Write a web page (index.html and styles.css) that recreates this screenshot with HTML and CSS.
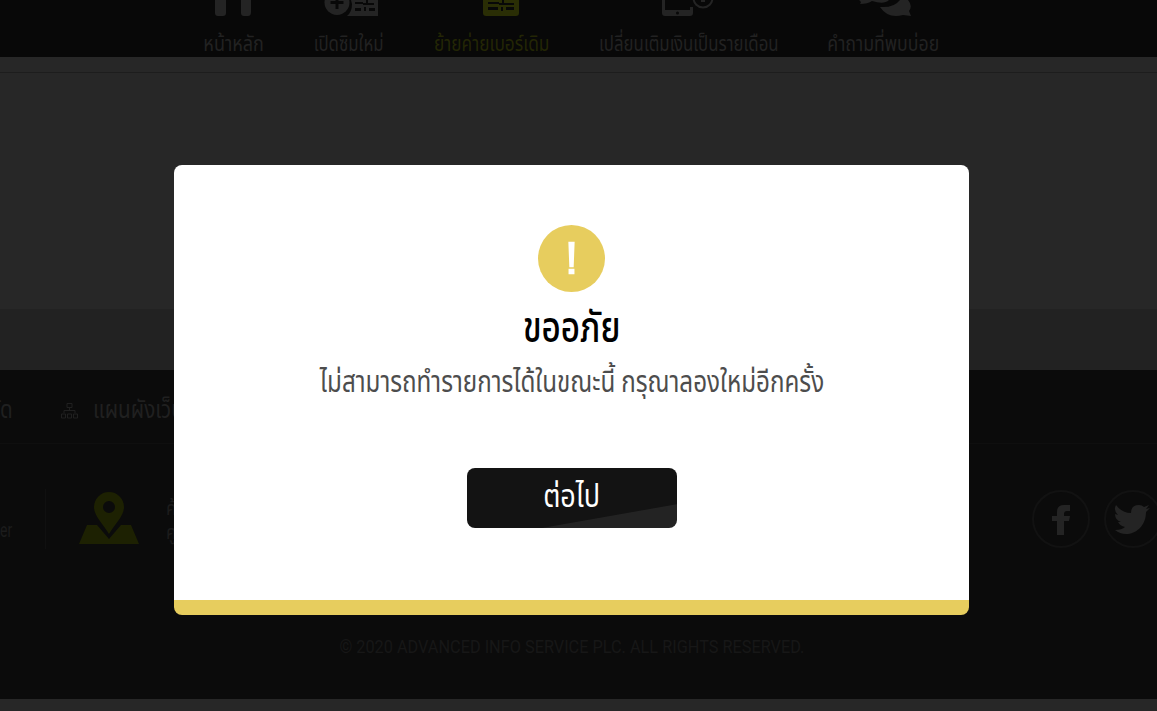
FILE: index.html
```html
<!DOCTYPE html>
<html lang="th">
<head>
<meta charset="utf-8">
<title>AIS</title>
<link rel="stylesheet" href="styles.css">
</head>
<body>
<div class="page">
  <header class="topbar">
    <nav class="nav">
      <a class="nav-item home"><svg class="nav-icon" viewBox="0 0 60 18"><path d="M11 0h36v12q0 4-3 4h-4q-3 0-3-3V0H22v13q0 3-3 3h-5q-3 0-3-3V0z"/></svg><span class="label"><span>หน้าหลัก</span></span></a>
      <a class="nav-item sim"><svg class="nav-icon" viewBox="0 0 60 18"><circle cx="18" cy="2.500" r="12.500"/><path d="M32 0h27v16H28q5-4 5-12z"/><path class="cut" d="M16.500-4h3v5h5v3h-5v5h-3V4h-5V1h5zM36 2h8v2h-8zM47 0h2v3h6v2H44V3h3zM36 8h6v3h-6zM45 7h2v4h-2zM50 8h6v3h-6z"/></svg><span class="label"><span>เปิดซิมใหม่</span></span></a>
      <a class="nav-item move"><svg class="nav-icon" viewBox="0 0 60 18"><path d="M12 0h36v13q0 3-3 3H15q-3 0-3-3z"/><path class="cut" d="M17 2h11v2H17zM31 0h2v3h10v2H28V3h3zM17 7h10v3H17zM30 7h2v4h-2zM35 7h8v3h-8z"/></svg><span class="label"><span>ย้ายค่ายเบอร์เดิม</span></span></a>
      <a class="nav-item switch"><svg class="nav-icon" viewBox="0 0 60 18"><path d="M3 0h3v10h25V7h3v6q0 3-3 3H6q-3 0-3-3z"/><circle class="cut" cx="18.500" cy="13" r="1.500"/><circle class="ring" cx="44" cy="-2" r="9.500"/><path d="M42-2h4v4h-4z"/></svg><span class="label"><span>เปลี่ยนเติมเงินเป็นรายเดือน</span></span></a>
      <a class="nav-item faq"><svg class="nav-icon" viewBox="0 0 60 18"><path d="M5 0Q8 2 6 4q8 0 12-3 12 4 17-1z"/><path d="M26 7q14 1 20-7h8q5 6 1 11l2 5-8-1q-15 4-23-8z"/></svg><span class="label"><span>คำถามที่พบบ่อย</span></span></a>
    </nav>
  </header>
  <main class="content"></main>
  <div class="pre-footer"></div>
  <footer class="footer">
    <div class="footer-links">
      <span class="link cropped">ัด</span>
      <svg class="sitemap" viewBox="0 0 17 16"><path d="M6 .5h5v4H6zM8.500 5v3M3 10V7.500h11V10M.5 11h4v4h-4zM6.500 11h4v4h-4zM12.500 11h4v4h-4z"/></svg>
      <span class="link">แผนผังเว็บ</span>
    </div>
    <div class="contact">
      <span class="latin"><span>er</span></span>
      <span class="rule"></span>
      <svg class="pin" viewBox="0 0 60 52"><path d="M8 33h10l12 14 12-14h10l8 19H0z"/><path fill-rule="evenodd" d="M30 0a15 15 0 0 0-15 15c0 9 9 17 15 27 6-10 15-18 15-27A15 15 0 0 0 30 0zm0 9a6 6 0 1 1 0 12 6 6 0 0 1 0-12z"/></svg>
      <div class="branch"><span>ค้นหา</span><span>ศูนย์</span></div>
      <div class="social">
        <svg viewBox="0 0 58 58"><circle cx="29" cy="29" r="28"/><path d="M25 45V31h-5v-5h5v-4q0-7 7-7h6v6h-3q-3 0-3 3v2h6l-1 5h-5v14z"/></svg>
        <svg viewBox="0 0 58 58"><circle cx="29" cy="29" r="28"/><path d="M11 40q7 0 10-3-5-1-7-5h3q-6-2-6-8l3 1q-5-5-2-10 6 8 15 8 0-8 8-8 3 0 5 2l5-2-3 4 4-1-4 4c0 14-10 22-20 22q-6 0-11-4z"/></svg>
      </div>
    </div>
    <p class="copyright"><span>© 2020 ADVANCED INFO SERVICE PLC. ALL RIGHTS RESERVED.</span></p>
  </footer>
</div>
<div class="overlay">
  <section class="modal">
    <svg class="alert" viewBox="0 0 68 68"><circle cx="34" cy="34" r="34"/><path d="M30.800 17h6.400l-1 26h-4.400zM31 44.500h6v5.500h-6z"/></svg>
    <h1 class="title"><span>ขออภัย</span></h1>
    <p class="message"><span>ไม่สามารถทำรายการได้ในขณะนี้ กรุณาลองใหม่อีกครั้ง</span></p>
    <button class="next"><span>ต่อไป</span></button>
  </section>
</div>
</body>
</html>
```
FILE: styles.css
```css
* { box-sizing: border-box; }
body { margin: 0; width: 1157px; height: 711px; overflow: hidden; background: #272727; font-family: Roboto, "Noto Sans Thai", "Noto Sans", "Liberation Sans", sans-serif; }
.page { height: 711px; display: flex; flex-direction: column; overflow: hidden; }
.topbar { height: 57px; background: #080808; }
.nav { display: flex; gap: 50px; padding-left: 204px; }
.nav-item { height: 57px; display: flex; flex-direction: column; align-items: center; color: #222; fill: #242424; font-size: 20px; }
.home { width: 60px; }
.sim { width: 70px; }
.move { width: 115px; color: #232605; fill: #2a2e05; }
.switch { width: 179px; }
.faq { width: 111px; }
.nav-icon { width: 60px; height: 18px; flex: none; }
.move .nav-icon { margin-left: 18px; }
.cut { fill: #080808; }
.ring { fill: none; stroke: #242424; stroke-width: 2; }
.label { display: flex; justify-content: center; line-height: 30px; padding-top: 10px; white-space: nowrap; }
.label span { transform: scale(.84, 1.08); }
.home .label span { transform: scale(.9, 1.08); }
.move .label span { transform: scale(.865, 1.08); }
.faq .label span { transform: scale(.885, 1.08); }
.content { height: 237px; margin-top: 15px; border-top: 1px solid #1d1d1d; }
.pre-footer { height: 61px; background: #222; }
.footer { height: 329px; background: #0b0b0b; }
.footer-links { height: 74px; display: flex; align-items: center; padding-top: 8px; border-bottom: 1px solid #0f0f0f; color: #202020; font-size: 24px; white-space: nowrap; }
.link { transform: scale(.86, 1.06); transform-origin: left; }
.cropped { width: 61px; }
.sitemap { width: 17px; height: 16px; margin-right: 15px; fill: none; stroke: #202020; }
.contact { height: 150px; display: flex; align-items: center; color: #1c1c1c; font-size: 20px; }
.contact > * { flex: none; }
.latin { width: 45px; padding-top: 22px; }
.latin span { display: inline-block; transform: scaleX(.7); transform-origin: left; }
.rule { width: 1px; height: 60px; background: #101010; }
.pin { width: 60px; height: 52px; margin: -2px 0 0 33px; fill: #1d2102; }
.branch { width: 120px; margin-left: 27px; display: flex; flex-direction: column; line-height: 24px; padding-top: 2px; transform: scaleX(.86); transform-origin: left; }
.social { display: flex; gap: 14px; margin-left: 746px; }
.social svg { width: 58px; height: 58px; fill: #242424; }
.social circle { fill: none; stroke: #121212; stroke-width: 2; }
.copyright { margin: 41px 0 0 339px; width: 465px; font-size: 18px; line-height: 24px; color: #171717; white-space: nowrap; display: flex; justify-content: center; }
.copyright span { transform: scaleX(.905); }
.overlay { position: absolute; left: 0; top: 0; width: 1143px; height: 711px; padding-top: 165px; display: flex; justify-content: center; align-items: flex-start; }
.modal { width: 795px; height: 450px; background: #fff; border-bottom: 15px solid #e7cd5e; border-radius: 8px; padding-top: 60px; display: flex; flex-direction: column; align-items: center; }
.alert { width: 67px; height: 67px; fill: #e7cd5e; }
.alert path { fill: #fff; }
.title, .message { margin: 0; display: flex; justify-content: center; white-space: nowrap; }
.title { height: 70px; line-height: 72px; font-size: 40px; font-weight: 500; color: #000; }
.title span { transform: scale(.83, 1.08); }
.message { height: 40px; line-height: 39px; font-size: 28px; color: #4d4d4d; }
.message span { transform: scale(.864, 1.06); }
.next { margin: 66px 0 0; width: 210px; height: 60px; border: 0; border-radius: 8px; padding: 0; color: #fff; font: 30px Roboto, "Noto Sans Thai", "Noto Sans", sans-serif; background: linear-gradient(170deg, #131313 75%, #232323 76%); display: flex; justify-content: center; align-items: center; }
.next span { transform: scale(.9, 1.05); }
```
